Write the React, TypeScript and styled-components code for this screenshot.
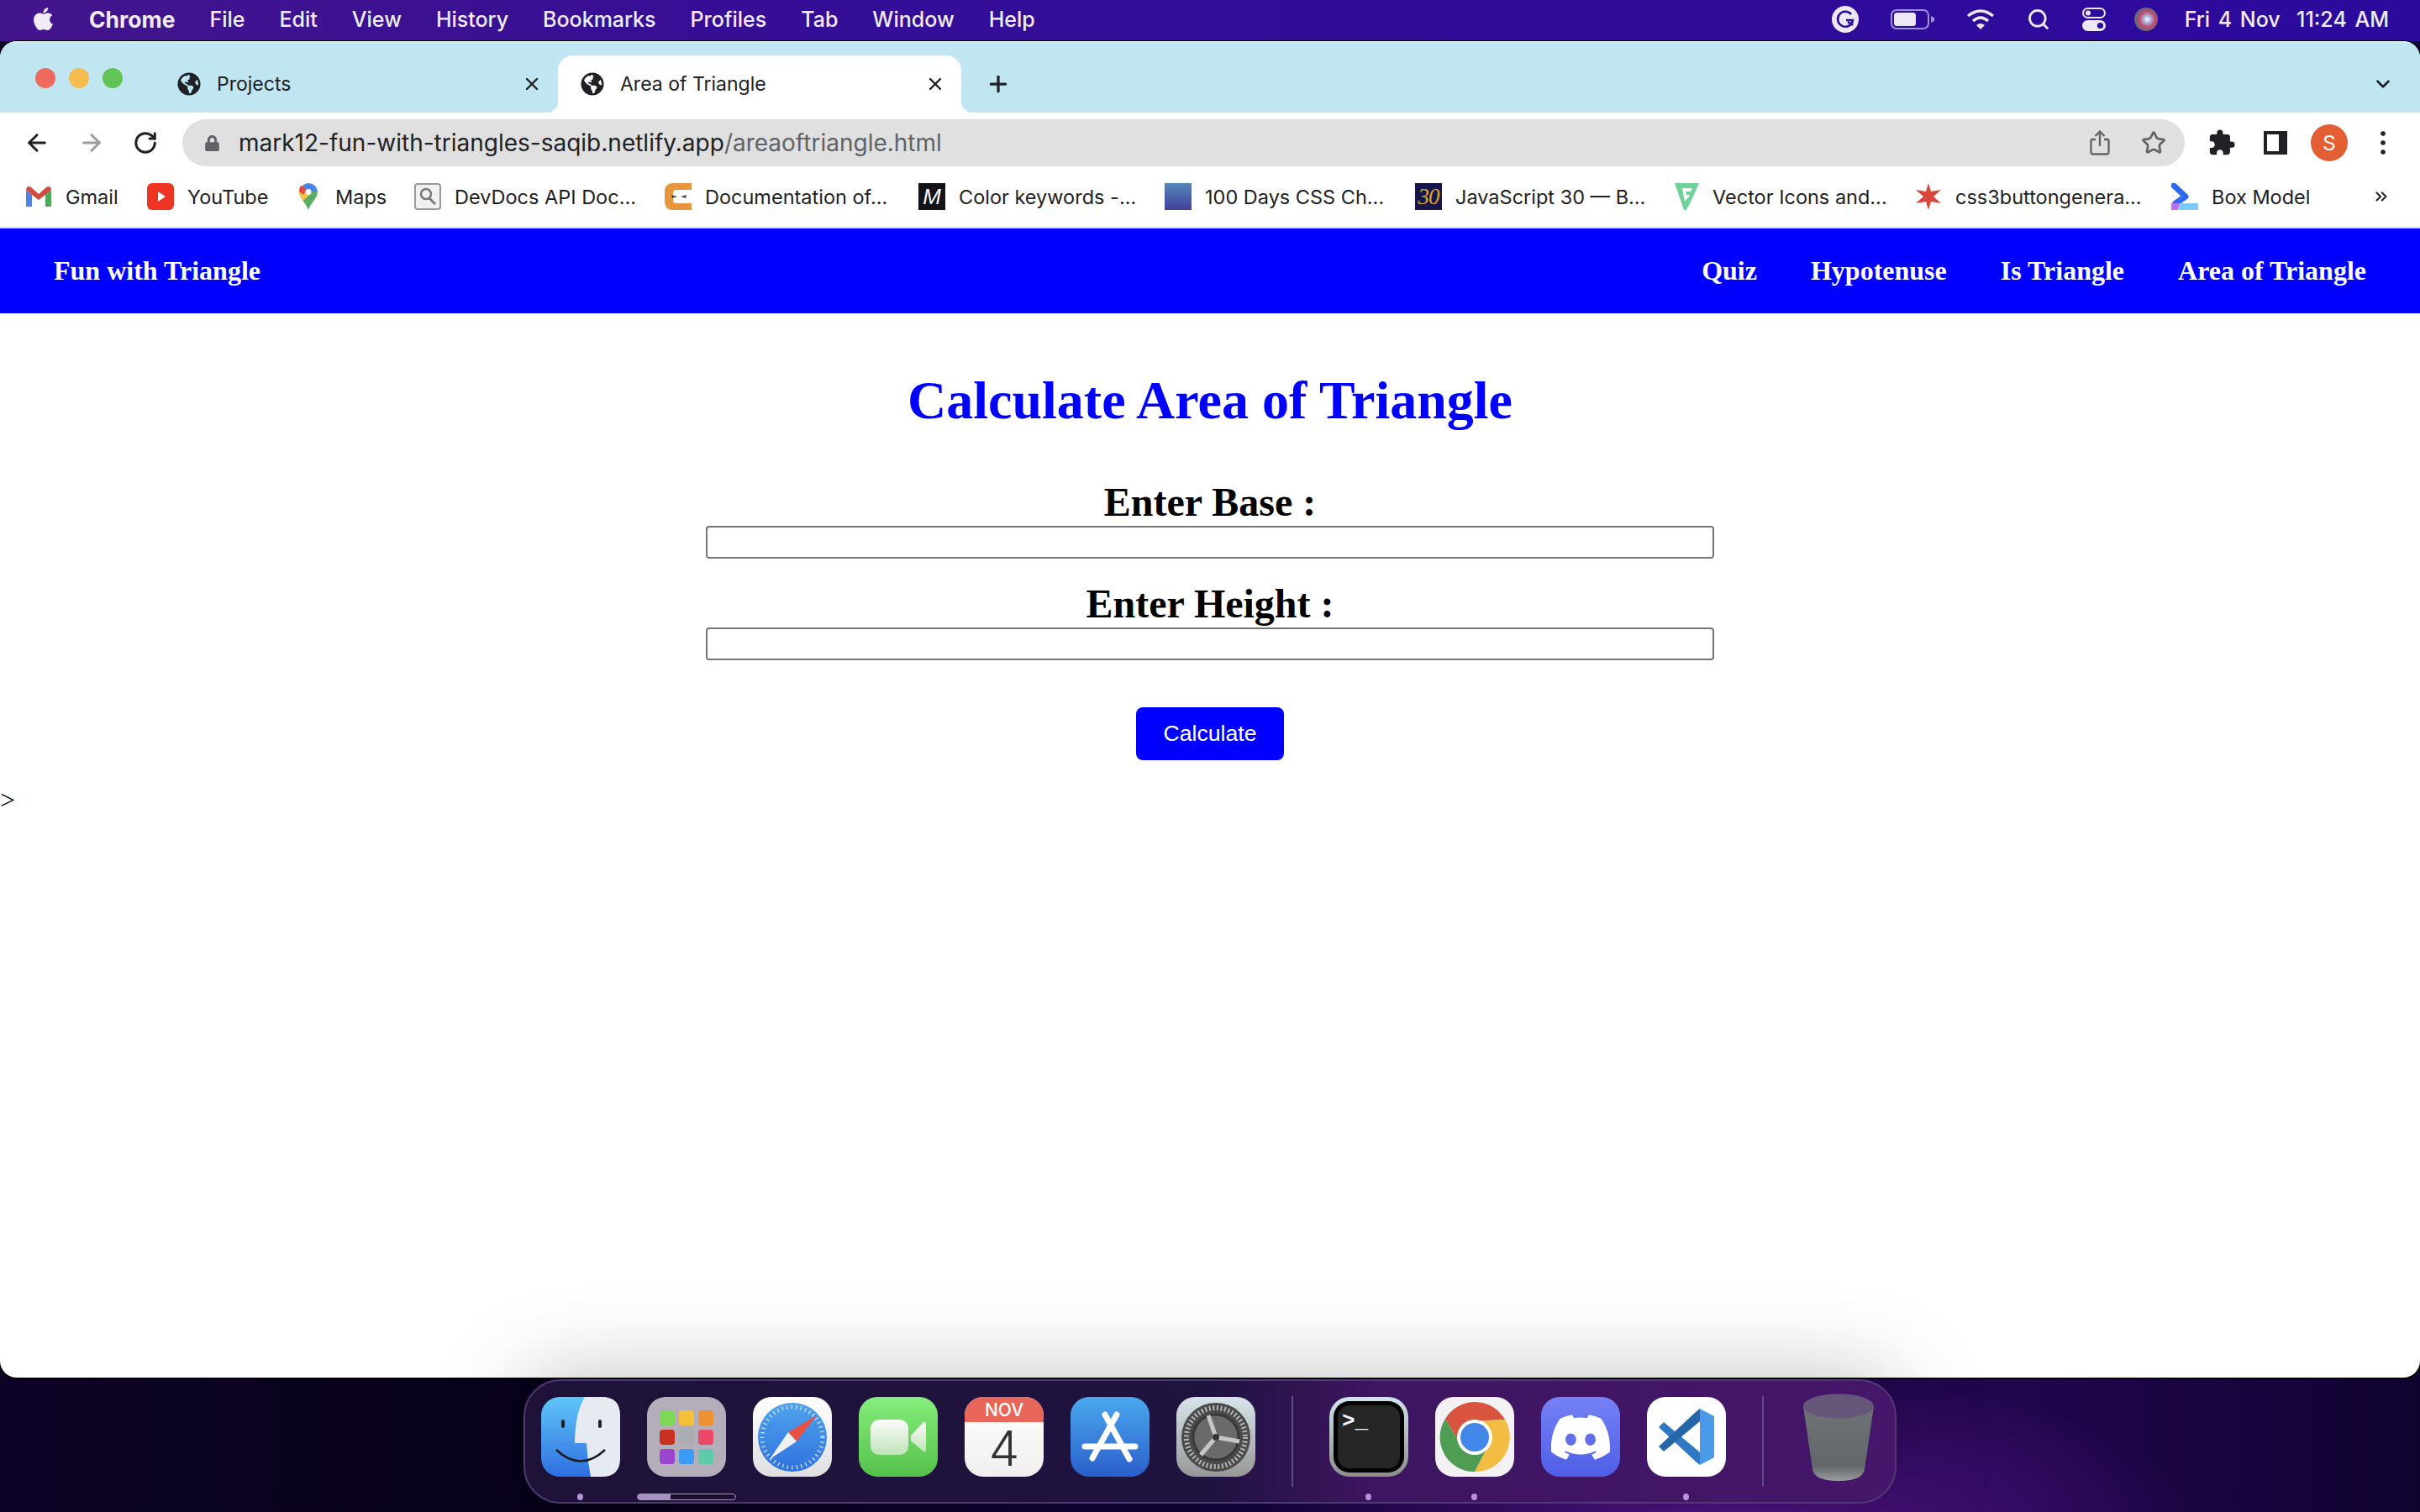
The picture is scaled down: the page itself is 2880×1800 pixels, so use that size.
import React from "react";
import styled, { createGlobalStyle } from "styled-components";
import { FaApple, FaGlobeAmericas, FaLock } from "react-icons/fa";
import { MdExtension } from "react-icons/md";
import { SiDiscord } from "react-icons/si";
import { ArrowLeft, ArrowRight, RotateCw, X, Plus, ChevronDown, Search, Star, ChevronsRight } from "lucide-react";

const GlobalStyle = createGlobalStyle`
  html, body { margin: 0; padding: 0; height: 100%; }
  body { font-family: Inter, "Liberation Sans", sans-serif; background: #0a0322; overflow: hidden; }
  * { box-sizing: border-box; }
`;

const Desktop = styled.div`
  width: 2880px;
  height: 1800px;
  display: grid;
  grid-template-rows: 49px 1591px 160px;
  background:
    radial-gradient(ellipse 560px 190px at 2050px 1815px, #54148a 0, rgba(84, 20, 138, 0) 100%),
    linear-gradient(90deg, #0c0326 0, #070118 25%, #12043c 50%, #22074f 70%, #20064c 84%, #0f0330 100%);
`;

const MenuBar = styled.header`
  display: flex;
  align-items: center;
  padding: 0 37px 4px 36px;
  color: #f1ecf8;
  font-size: 25px;
  font-weight: 500;
  background: linear-gradient(90deg, #43158d 0, #340d97 35%, #2c0a9c 100%);
`;

const MenuItems = styled.nav`
  display: flex;
  align-items: center;
  gap: 41px;
`;

const AppName = styled.span`
  font-size: 26.5px;
  font-weight: 700;
  margin-left: 39px;
`;

const StatusItems = styled.div`
  margin-left: auto;
  display: flex;
  align-items: center;
  gap: 38px;
`;

const SiriSlot = styled.span`
  display: flex;
  margin-left: -4px;
`;

const Clock = styled.span`
  margin-left: -6px;
  word-spacing: 3px;
  white-space: nowrap;
`;

const Window = styled.main`
  display: flex;
  flex-direction: column;
  background: #fff;
  border-radius: 20px;
  overflow: hidden;
  box-shadow: 0 0 0 1px #000, 0 1px 0 1px #000;
`;

const TabStrip = styled.div`
  height: 85px;
  flex: none;
  display: flex;
  align-items: flex-end;
  background: #c0e6f1;
  border-top: 2px solid #d3eef6;
`;

const TrafficLights = styled.div`
  width: 184px;
  height: 83px;
  flex: none;
  padding-left: 42px;
  display: flex;
  align-items: center;
  gap: 16px;
`;

const Light = styled.span<{ $color: string }>`
  width: 24px;
  height: 24px;
  border-radius: 50%;
  background: ${(p) => p.$color};
`;

const Tab = styled.div<{ $active?: boolean }>`
  position: relative;
  width: 480px;
  height: 68px;
  flex: none;
  display: flex;
  align-items: center;
  padding: 0 19px 0 27px;
  gap: 19px;
  font-size: 23px;
  color: #202124;
  border-radius: 18px 18px 0 0;
  background: ${(p) => (p.$active ? "#fff" : "transparent")};
  ${(p) =>
    p.$active &&
    `
    &::before, &::after {
      content: "";
      position: absolute;
      bottom: 0;
      width: 14px;
      height: 14px;
    }
    &::before { left: -14px; background: radial-gradient(circle at 0 0, transparent 14px, #fff 14.5px); }
    &::after { right: -14px; background: radial-gradient(circle at 100% 0, transparent 14px, #fff 14.5px); }
  `}
`;

const TabTitle = styled.span`
  flex: 1;
`;

const StripButton = styled.div<{ $end?: boolean }>`
  height: 68px;
  display: flex;
  align-items: center;
  color: #202124;
  margin-left: ${(p) => (p.$end ? "auto" : "29px")};
  margin-right: ${(p) => (p.$end ? "31px" : "0")};
`;

const Toolbar = styled.div`
  height: 72px;
  flex: none;
  display: flex;
  align-items: center;
  color: #202124;
`;

const NavButtons = styled.div`
  width: 217px;
  flex: none;
  padding-left: 28px;
  display: flex;
  align-items: center;
  gap: 33px;
`;

const Omnibox = styled.div`
  width: 2383px;
  height: 56px;
  flex: none;
  border-radius: 28px;
  background: #e0e0e0;
  display: flex;
  align-items: center;
  padding: 0 22px 0 26px;
  font-size: 28px;
  color: #202124;
`;

const Url = styled.span`
  margin-left: 22px;
  flex: 1;
`;

const UrlPath = styled.span`
  color: #5f6368;
`;

const OmniActions = styled.div`
  display: flex;
  align-items: center;
  gap: 37px;
  color: #636467;
`;

const ToolActions = styled.div`
  flex: 1;
  display: flex;
  align-items: center;
  padding-left: 12px;
`;

const ToolCell = styled.div`
  width: 64px;
  flex: none;
  display: flex;
  align-items: center;
  justify-content: center;
`;

const Avatar = styled.div`
  width: 44px;
  height: 44px;
  border-radius: 50%;
  background: #e45e33;
  color: #fff;
  font-size: 24px;
  display: flex;
  align-items: center;
  justify-content: center;
`;

const Bookmarks = styled.div`
  height: 66px;
  flex: none;
  display: flex;
  align-items: center;
  padding: 0 35px 8px 30px;
  gap: 34px;
  font-size: 23.5px;
  color: #202124;
  border-bottom: 2px solid #d9d9d9;
`;

const Bookmark = styled.div`
  display: flex;
  align-items: center;
  gap: 16px;
`;

const BookmarkIcon = styled.span<{ $bg?: string }>`
  width: 32px;
  height: 32px;
  flex: none;
  display: flex;
  align-items: center;
  justify-content: center;
  background: ${(p) => p.$bg || "transparent"};
`;

const BookmarkLabel = styled.span<{ $width: number }>`
  width: ${(p) => p.$width}px;
  white-space: nowrap;
`;

const MonoM = styled.i`
  color: #fff;
  font: italic 400 26px "Liberation Sans", sans-serif;
`;

const Thirty = styled.i`
  color: #e0a52c;
  font: italic 400 27px "Liberation Serif", serif;
  letter-spacing: -1px;
`;

const MoreMarks = styled.div`
  margin-left: auto;
  color: #202124;
  display: flex;
`;

const Page = styled.div`
  flex: 1;
  display: flex;
  flex-direction: column;
  font-family: "Liberation Serif", "Times New Roman", serif;
  color: #000;
`;

const SiteNav = styled.div`
  height: 101px;
  flex: none;
  display: flex;
  align-items: center;
  justify-content: space-between;
  padding: 0 64px;
  background: #0000ff;
  color: #fff;
  font-size: 32px;
  font-weight: 700;
`;

const SiteLinks = styled.div`
  display: flex;
  gap: 64px;
`;

const Heading = styled.h1`
  margin: 67px 0 56px;
  font-size: 64px;
  line-height: 74px;
  font-weight: 700;
  color: #0000ff;
  text-align: center;
`;

const Form = styled.form`
  width: 1200px;
  margin: 0 auto;
  display: flex;
  flex-direction: column;
  align-items: center;
`;

const FieldLabel = styled.label`
  font-size: 48px;
  line-height: 55px;
  font-weight: 700;
`;

const NumberInput = styled.input`
  width: 100%;
  height: 39px;
  margin: 1px 0 26px;
  border: 2px solid #767676;
  border-radius: 4px;
  background: #fff;
  padding: 0 4px;
`;

const CalcButton = styled.button`
  width: 176px;
  height: 63px;
  margin-top: 30px;
  border: 0;
  border-radius: 8px;
  background: #0000ff;
  color: #fff;
  font: 400 26.67px "Liberation Sans", Arial, sans-serif;
`;

const Stray = styled.div`
  margin-top: 29px;
  font-size: 32px;
  line-height: 37px;
`;

const DockRow = styled.footer`
  display: flex;
  justify-content: center;
  align-items: flex-start;
  padding-top: 2px;
  position: relative;
`;

const Dock = styled.div`
  width: 1634px;
  height: 148px;
  display: flex;
  align-items: flex-start;
  padding: 19px 0 0 19px;
  gap: 32px;
  border: 2px solid #4f3a72;
  border-radius: 44px;
  background: linear-gradient(90deg, #1f1238 0, #1f1340 50%, #3e1560 62%, #45166b 100%);
  box-shadow: 0 0 110px rgba(0, 0, 0, 0.26);
`;

const Slot = styled.div`
  position: relative;
  width: 94px;
  height: 95px;
  flex: none;
`;

const Running = styled.span`
  position: absolute;
  left: 43px;
  top: 115px;
  width: 7px;
  height: 8px;
  border-radius: 50%;
  background: #b595d8;
`;

const LaunchBar = styled.span`
  position: absolute;
  left: -12px;
  top: 115px;
  width: 118px;
  height: 8px;
  border-radius: 4px;
  background: linear-gradient(90deg, #a591bd 0 34%, #1b1030 34% 97%);
  border: 1px solid #a591bd;
`;

const Divider = styled.span`
  width: 2px;
  height: 108px;
  margin: -1px 11px 0;
  flex: none;
  background: #5f4a82;
`;

const Calendar = styled.div`
  width: 94px;
  height: 95px;
  border-radius: 22px;
  display: flex;
  flex-direction: column;
  background: linear-gradient(#fff, #f1efee);
`;

const CalMonth = styled.div`
  height: 30px;
  border-radius: 22px 22px 0 0;
  background: #e9675a;
  color: #fff;
  font-size: 21px;
  font-weight: 500;
  line-height: 31px;
  text-align: center;
`;

const CalDay = styled.div`
  color: #333;
  font: 300 58px/62px Inter, sans-serif;
  text-align: center;
`;

const Terminal = styled.div`
  width: 94px;
  height: 95px;
  border-radius: 24px;
  padding: 5px;
  background: linear-gradient(#cfe6ee, #8d8d8a);
`;

const TerminalBody = styled.div`
  height: 100%;
  padding: 5px;
  border-radius: 19px;
  background: #000;
`;

const TerminalScreen = styled.div`
  height: 100%;
  padding: 6px 5px;
  border-radius: 14px;
  background: #262626;
  color: #f4f4f4;
  font: 700 26px/26px "Liberation Mono", monospace;
`;

const DiscordTile = styled.div`
  width: 94px;
  height: 95px;
  border-radius: 22px;
  display: flex;
  align-items: center;
  justify-content: center;
  color: #fff;
  background: linear-gradient(#7681f5, #4f5ee6);
`;

const TrashSlot = styled.div`
  width: 86px;
  height: 105px;
  flex: none;
  margin: -4px 0 0 3px;
`;

const Tile = ({ children }: { children: React.ReactNode }) => (
  <svg width="94" height="95" viewBox="0 0 94 95">
    {children}
  </svg>
);

const Finder = () => (
  <Tile>
    <defs>
      <linearGradient id="fb" x1="0" y1="0" x2="0" y2="1">
        <stop offset="0" stopColor="#5fc6f8" />
        <stop offset="1" stopColor="#2f6fe0" />
      </linearGradient>
    </defs>
    <rect width="94" height="95" rx="22" fill="url(#fb)" />
    <path d="M52 0H72Q94 0 94 22V73Q94 95 72 95H59Q55 75 54 55H40Q40 20 52 0Z" fill="#e6ebf2" />
    <rect x="24" y="27" width="4" height="10" rx="2" fill="#222" />
    <rect x="68" y="27" width="4" height="10" rx="2" fill="#222" />
    <path d="M18 63Q47 90 76 63" fill="none" stroke="#1c1c1c" strokeWidth="2.5" />
  </Tile>
);

const launchColors = ["#7ed957", "#f5c03a", "#ec9233", "#c9301f", "#a9adb0", "#ea4a66", "#9a44d0", "#3b9bf5", "#5dcbaa"];

const Launchpad = () => (
  <Tile>
    <rect width="94" height="95" rx="22" fill="#b3aeba" />
    {launchColors.map((c, i) => (
      <rect key={c} x={15 + (i % 3) * 23} y={16 + Math.floor(i / 3) * 23} width="18" height="18" rx="4" fill={c} />
    ))}
  </Tile>
);

const Safari = () => (
  <Tile>
    <defs>
      <linearGradient id="sb" x1="0" y1="0" x2="0" y2="1">
        <stop offset="0" stopColor="#4ea3ee" />
        <stop offset="1" stopColor="#2f72de" />
      </linearGradient>
      <linearGradient id="sw" x1="0" y1="0" x2="0" y2="1">
        <stop offset="0" stopColor="#fff" />
        <stop offset="1" stopColor="#dfdfdf" />
      </linearGradient>
    </defs>
    <rect width="94" height="95" rx="22" fill="url(#sw)" />
    <circle cx="47" cy="48" r="41" fill="url(#sb)" />
    <circle cx="47" cy="48" r="36" fill="none" stroke="#d8e8fa" strokeWidth="5" strokeDasharray="1.2 4.4" />
    <path d="M76 22L42 42 52 53Z" fill="#e8503f" />
    <path d="M20 74L42 42 52 53Z" fill="#f2f2f2" />
  </Tile>
);

const FaceTime = () => (
  <Tile>
    <defs>
      <linearGradient id="ft" x1="0" y1="0" x2="0" y2="1">
        <stop offset="0" stopColor="#86ee7c" />
        <stop offset="1" stopColor="#54c149" />
      </linearGradient>
      <linearGradient id="fw" x1="0" y1="0" x2="0" y2="1">
        <stop offset="0" stopColor="#fdfdfd" />
        <stop offset="1" stopColor="#bfe3b8" />
      </linearGradient>
    </defs>
    <rect width="94" height="95" rx="22" fill="url(#ft)" />
    <rect x="14" y="27" width="45" height="42" rx="10" fill="url(#fw)" />
    <path d="M62 46L77 30Q80 29 80 33V62Q80 66 77 65L62 52Z" fill="url(#fw)" />
  </Tile>
);

const AppStore = () => (
  <Tile>
    <defs>
      <linearGradient id="as" x1="0" y1="0" x2="0" y2="1">
        <stop offset="0" stopColor="#4aa8ee" />
        <stop offset="1" stopColor="#2a5fcb" />
      </linearGradient>
    </defs>
    <rect width="94" height="95" rx="22" fill="url(#as)" />
    <g stroke="#fff" strokeWidth="7" strokeLinecap="round" fill="none">
      <path d="M55 21L26 73" />
      <path d="M41 21L70 74" />
      <path d="M17 59H77" />
    </g>
  </Tile>
);

const Settings = () => (
  <Tile>
    <defs>
      <linearGradient id="sg" x1="0" y1="0" x2="0" y2="1">
        <stop offset="0" stopColor="#d7e4ea" />
        <stop offset="1" stopColor="#979797" />
      </linearGradient>
    </defs>
    <rect width="94" height="95" rx="22" fill="url(#sg)" />
    <circle cx="47" cy="48" r="41" fill="#4a4a4a" />
    <circle cx="47" cy="48" r="35" fill="none" stroke="#b5b5b5" strokeWidth="6" strokeDasharray="2 2.6" />
    <circle cx="47" cy="48" r="27" fill="#6a6a6a" stroke="#3a3a3a" strokeWidth="3" />
    <g stroke="#c6c6c6" strokeWidth="5">
      <path d="M47 48L38 22" />
      <path d="M47 48L75 53" />
      <path d="M47 48L29 69" />
    </g>
    <circle cx="47" cy="48" r="4" fill="#333" />
  </Tile>
);

const Chrome = () => (
  <Tile>
    <rect width="94" height="95" rx="22" fill="#f3f1f4" />
    <path d="M83 27A41 41 0 0 0 12 26L30 57 47 29Z" fill="#d9543f" />
    <path d="M83 27A41 41 0 0 1 47 89L63 57 47 29Z" fill="#f2bd42" />
    <path d="M12 26A41 41 0 0 0 47 89L64 56 30 57Z" fill="#4f9c55" />
    <circle cx="47" cy="48" r="21" fill="#fff" />
    <circle cx="47" cy="48" r="17" fill="#4286ea" />
  </Tile>
);

const VSCode = () => (
  <Tile>
    <rect width="94" height="95" rx="22" fill="#fff" />
    <path d="M14 36L20 30 63 66V81L58 77Z" fill="#2f78c4" />
    <path d="M14 59L20 65 63 29V14L58 18Z" fill="#2566a8" />
    <path d="M63 14L80 23V72L63 81Z" fill="#4a9ae8" />
  </Tile>
);

const Trash = () => (
  <svg width="86" height="105" viewBox="0 0 86 105">
    <defs>
      <linearGradient id="tr" x1="0" y1="0" x2="0" y2="1">
        <stop offset="0" stopColor="#6e7276" />
        <stop offset="0.8" stopColor="#63676a" />
        <stop offset="1" stopColor="#9a9da0" />
      </linearGradient>
    </defs>
    <path d="M1 15L12 90Q14 104 43 104T74 90L85 15Z" fill="url(#tr)" />
    <ellipse cx="43" cy="15" rx="42" ry="14.5" fill="#66567a" />
  </svg>
);

const GlobeIcon = () => <FaGlobeAmericas size={28} color="#202124" />;

const bookmarks: { label: string; width: number; icon: React.ReactNode; bg?: string }[] = [
  {
    label: "Gmail",
    width: 63,
    icon: (
      <svg width="30" height="24" viewBox="0 0 30 24">
        <path d="M0 4V24H7V10Z" fill="#4a86e8" />
        <path d="M23 24H30V4L23 10Z" fill="#4fa75a" />
        <path d="M0 4Q1-2 6 1L15 9 24 1Q29-2 30 4L23 10 15 16 7 10Z" fill="#d24b3e" />
      </svg>
    ),
  },
  {
    label: "YouTube",
    width: 94,
    icon: (
      <svg width="32" height="32" viewBox="0 0 32 32">
        <rect width="32" height="32" rx="6" fill="#ee3524" />
        <path d="M13 10L22 16 13 22Z" fill="#fff" />
      </svg>
    ),
  },
  {
    label: "Maps",
    width: 60,
    icon: (
      <svg width="22" height="32" viewBox="0 0 22 32">
        <path d="M11 32C8 23 0 18 0 10H22C22 18 14 23 11 32Z" fill="#5aad62" />
        <path d="M0 10C0 15 3 18 5 21L14 12 5 8Z" fill="#f4c542" />
        <path d="M2 3A11 11 0 0 0 0 10L5 14 11 5Z" fill="#dd5144" />
        <path d="M11 0A11 11 0 0 1 22 10H11L4 3Q7 0 11 0Z" fill="#4a86e8" />
        <circle cx="11" cy="10.5" r="3.5" fill="#fff" />
      </svg>
    ),
  },
  {
    label: "DevDocs API Doc...",
    width: 216,
    icon: (
      <svg width="32" height="32" viewBox="0 0 32 32">
        <rect x="1" y="1" width="30" height="30" rx="3" fill="#f1f1f1" stroke="#9a9a9a" strokeWidth="2" />
        <circle cx="14" cy="13" r="6" fill="none" stroke="#7a7a7a" strokeWidth="2.5" />
        <path d="M18 18L25 25" stroke="#7a7a7a" strokeWidth="3" />
      </svg>
    ),
  },
  {
    label: "Documentation of...",
    width: 220,
    icon: (
      <svg width="32" height="32" viewBox="0 0 32 32">
        <path d="M10 0H32V8H14Q10 8 10 12V20Q10 24 14 24H32V32H10Q0 32 0 22V10Q0 0 10 0Z" fill="#e8963e" />
        <path d="M8 14L15 16 9 18ZM26 14L19 16 25 18Z" fill="#444" />
      </svg>
    ),
  },
  { label: "Color keywords -...", width: 211, bg: "#121217", icon: <MonoM>M</MonoM> },
  {
    label: "100 Days CSS Ch...",
    width: 216,
    icon: (
      <svg width="32" height="32" viewBox="0 0 32 32">
        <defs>
          <linearGradient id="dc" x1="0" y1="0" x2="0" y2="1">
            <stop offset="0" stopColor="#5388b8" />
            <stop offset="1" stopColor="#43409b" />
          </linearGradient>
        </defs>
        <rect width="32" height="32" fill="url(#dc)" />
      </svg>
    ),
  },
  { label: "JavaScript 30 — B...", width: 224, bg: "#17164a", icon: <Thirty>30</Thirty> },
  {
    label: "Vector Icons and...",
    width: 207,
    icon: (
      <svg width="32" height="32" viewBox="0 0 32 32">
        <path d="M3 0H32L24 18 17 32H14Z" fill="#70d29b" />
        <path d="M12 6H24L22 10H16L17 14H21L19 18H18L15 22Z" fill="#fff" />
      </svg>
    ),
  },
  {
    label: "css3buttongenera...",
    width: 223,
    icon: (
      <svg width="32" height="32" viewBox="0 0 32 32">
        <path d="M16 0L19 10 31 8 22 16 31 24 19 22 16 32 13 22 1 24 10 16 1 8 13 10Z" fill="#d8473a" />
      </svg>
    ),
  },
  {
    label: "Box Model",
    width: 116,
    icon: (
      <svg width="32" height="32" viewBox="0 0 32 32">
        <path d="M3 3L17 16 5 24" fill="none" stroke="#2e68f0" strokeWidth="7" strokeLinecap="round" strokeLinejoin="round" />
        <path d="M0 24H10L8 32H0Z" fill="#b96ff0" />
        <path d="M10 24H32V32H8Z" fill="#7fc8fb" />
      </svg>
    ),
  },
];

const Grammarly = () => (
  <svg width="32" height="32" viewBox="0 0 32 32">
    <circle cx="16" cy="16" r="16" fill="#ece8f5" />
    <path d="M23 10A9 9 0 1 0 25 17H17" fill="none" stroke="#2c0a9c" strokeWidth="2.6" />
    <path d="M19 19L25 23" stroke="#2c0a9c" strokeWidth="2.6" />
  </svg>
);

const Battery = () => (
  <svg width="52" height="24" viewBox="0 0 52 24">
    <rect x="1" y="1" width="44" height="22" rx="6" fill="none" stroke="#9d8fd6" strokeWidth="2" />
    <rect x="4" y="4" width="26" height="16" rx="3.5" fill="#ece8f5" />
    <path d="M48 8L52 10V14L48 16Z" fill="#9d8fd6" />
  </svg>
);

const Wifi = () => (
  <svg width="34" height="26" viewBox="0 0 34 26">
    <g fill="none" stroke="#ece8f5" strokeWidth="3.4">
      <path d="M2 9Q17-3 32 9" />
      <path d="M8 15Q17 7 26 15" />
    </g>
    <path d="M12 20Q17 16 22 20L17 25Z" fill="#ece8f5" />
  </svg>
);

const ControlCenter = () => (
  <svg width="28" height="28" viewBox="0 0 28 28">
    <rect x="1" y="1" width="26" height="11" rx="5.5" fill="none" stroke="#ece8f5" strokeWidth="2" />
    <circle cx="7" cy="6.5" r="3" fill="#ece8f5" />
    <rect y="15" width="28" height="13" rx="6.5" fill="#ece8f5" />
    <circle cx="21.5" cy="21.5" r="3.6" fill="#2c0a9c" />
  </svg>
);

const Siri = () => (
  <svg width="28" height="28" viewBox="0 0 28 28">
    <defs>
      <radialGradient id="si" cx="0.55" cy="0.5" r="0.6">
        <stop offset="0" stopColor="#fff" />
        <stop offset="0.25" stopColor="#a9b6e0" />
        <stop offset="0.55" stopColor="#c04a70" />
        <stop offset="1" stopColor="#2f7d78" />
      </radialGradient>
    </defs>
    <circle cx="14" cy="14" r="14" fill="url(#si)" />
  </svg>
);

const ShareIcon = () => (
  <svg width="24" height="30" viewBox="0 0 24 30" fill="none" stroke="#636467" strokeWidth="2.4">
    <path d="M7 11H3Q1.5 11 1.5 13V26Q1.5 28.5 4 28.5H20Q22.5 28.5 22.5 26V13Q22.5 11 21 11H17" />
    <path d="M12 19V2M6.5 7L12 1.5 17.5 7" />
  </svg>
);

const SidePanel = () => (
  <svg width="28" height="28" viewBox="0 0 28 28">
    <path d="M0 0H28V28H0ZM4 4V24H18V4Z" fill="#202124" fillRule="evenodd" />
  </svg>
);

const MoreDots = () => (
  <svg width="6" height="28" viewBox="0 0 6 28">
    <circle cx="3" cy="3" r="2.8" fill="#202124" />
    <circle cx="3" cy="14" r="2.8" fill="#202124" />
    <circle cx="3" cy="25" r="2.8" fill="#202124" />
  </svg>
);

export default function App() {
  return (
    <>
      <GlobalStyle />
      <Desktop>
        <MenuBar>
          <FaApple size={31} color="#f1ecf8" />
          <MenuItems>
            <AppName>Chrome</AppName>
            <span>File</span>
            <span>Edit</span>
            <span>View</span>
            <span>History</span>
            <span>Bookmarks</span>
            <span>Profiles</span>
            <span>Tab</span>
            <span>Window</span>
            <span>Help</span>
          </MenuItems>
          <StatusItems>
            <Grammarly />
            <Battery />
            <Wifi />
            <Search size={28} color="#ece8f5" strokeWidth={2.4} />
            <ControlCenter />
            <SiriSlot>
              <Siri />
            </SiriSlot>
            <Clock>Fri 4 Nov&nbsp; 11:24 AM</Clock>
          </StatusItems>
        </MenuBar>

        <Window>
          <TabStrip>
            <TrafficLights>
              <Light $color="#ee6a5f" />
              <Light $color="#f5bd4f" />
              <Light $color="#61c454" />
            </TrafficLights>
            <Tab>
              <GlobeIcon />
              <TabTitle>Projects</TabTitle>
              <X size={24} strokeWidth={2.4} />
            </Tab>
            <Tab $active>
              <GlobeIcon />
              <TabTitle>Area of Triangle</TabTitle>
              <X size={24} strokeWidth={2.4} />
            </Tab>
            <StripButton>
              <Plus size={30} strokeWidth={2.6} />
            </StripButton>
            <StripButton $end>
              <ChevronDown size={26} strokeWidth={2.4} />
            </StripButton>
          </TabStrip>

          <Toolbar>
            <NavButtons>
              <ArrowLeft size={32} strokeWidth={2.2} />
              <ArrowRight size={32} strokeWidth={2.2} color="#9b9c9e" />
              <RotateCw size={30} strokeWidth={2.4} />
            </NavButtons>
            <Omnibox>
              <FaLock size={19} color="#5f6368" />
              <Url>
                mark12-fun-with-triangles-saqib.netlify.app<UrlPath>/areaoftriangle.html</UrlPath>
              </Url>
              <OmniActions>
                <ShareIcon />
                <Star size={30} strokeWidth={2.2} />
              </OmniActions>
            </Omnibox>
            <ToolActions>
              <ToolCell>
                <MdExtension size={34} color="#202124" />
              </ToolCell>
              <ToolCell>
                <SidePanel />
              </ToolCell>
              <ToolCell>
                <Avatar>S</Avatar>
              </ToolCell>
              <ToolCell>
                <MoreDots />
              </ToolCell>
            </ToolActions>
          </Toolbar>

          <Bookmarks>
            {bookmarks.map((b) => (
              <Bookmark key={b.label}>
                <BookmarkIcon $bg={b.bg}>{b.icon}</BookmarkIcon>
                <BookmarkLabel $width={b.width}>{b.label}</BookmarkLabel>
              </Bookmark>
            ))}
            <MoreMarks>
              <ChevronsRight size={22} strokeWidth={2.2} />
            </MoreMarks>
          </Bookmarks>

          <Page>
            <SiteNav>
              <span>Fun with Triangle</span>
              <SiteLinks>
                <span>Quiz</span>
                <span>Hypotenuse</span>
                <span>Is Triangle</span>
                <span>Area of Triangle</span>
              </SiteLinks>
            </SiteNav>
            <Heading>Calculate Area of Triangle</Heading>
            <Form>
              <FieldLabel htmlFor="base">Enter Base :</FieldLabel>
              <NumberInput id="base" />
              <FieldLabel htmlFor="height">Enter Height :</FieldLabel>
              <NumberInput id="height" />
              <CalcButton type="button">Calculate</CalcButton>
            </Form>
            <Stray>&gt;</Stray>
          </Page>
        </Window>

        <DockRow>
          <Dock>
            <Slot>
              <Finder />
              <Running />
            </Slot>
            <Slot>
              <Launchpad />
              <LaunchBar />
            </Slot>
            <Slot>
              <Safari />
            </Slot>
            <Slot>
              <FaceTime />
            </Slot>
            <Slot>
              <Calendar>
                <CalMonth>NOV</CalMonth>
                <CalDay>4</CalDay>
              </Calendar>
            </Slot>
            <Slot>
              <AppStore />
            </Slot>
            <Slot>
              <Settings />
            </Slot>
            <Divider />
            <Slot>
              <Terminal>
                <TerminalBody>
                  <TerminalScreen>&gt;_</TerminalScreen>
                </TerminalBody>
              </Terminal>
              <Running />
            </Slot>
            <Slot>
              <Chrome />
              <Running />
            </Slot>
            <Slot>
              <DiscordTile>
                <SiDiscord size={70} />
              </DiscordTile>
            </Slot>
            <Slot>
              <VSCode />
              <Running />
            </Slot>
            <Divider />
            <TrashSlot>
              <Trash />
            </TrashSlot>
          </Dock>
        </DockRow>
      </Desktop>
    </>
  );
}
